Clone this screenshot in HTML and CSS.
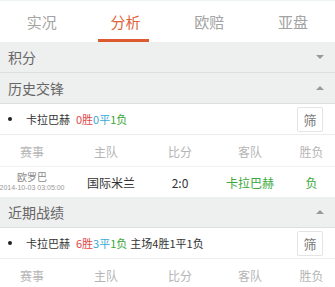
FILE: index.html
```html
<!DOCTYPE html>
<html lang="zh-CN">
<head>
    <meta charset="UTF-8">
    <meta name="viewport" content="width=device-width, initial-scale=1.0">
    <title>分析</title>
    <link rel="stylesheet" href="styles.css">
</head>
<body>

    <div class="tabs">
        <div class="tab">实况</div>
        <div class="tab active">分析</div>
        <div class="tab">欧赔</div>
        <div class="tab">亚盘</div>
    </div>

    <div class="section">
        <span>积分</span>
        <span class="arrow down"></span>
    </div>

    <div class="section">
        <span>历史交锋</span>
        <span class="arrow up"></span>
    </div>

    <div class="summary">
        <span class="dot"></span>
        <span class="team">卡拉巴赫</span>
        <span class="red">0胜</span><span class="blue">0平</span><span class="green">1负</span>
        <button class="filter">筛</button>
    </div>

    <div class="grid head">
        <div>赛事</div>
        <div>主队</div>
        <div>比分</div>
        <div>客队</div>
        <div>胜负</div>
    </div>

    <div class="grid match">
        <div class="league">
            <span class="league-name">欧罗巴</span>
            <span class="date">2014-10-03 03:05:00</span>
        </div>
        <div class="home-team">国际米兰</div>
        <div>2:0</div>
        <div class="green">卡拉巴赫</div>
        <div class="green">负</div>
    </div>

    <div class="section">
        <span>近期战绩</span>
        <span class="arrow up"></span>
    </div>

    <div class="summary">
        <span class="dot"></span>
        <span class="team">卡拉巴赫</span>
        <span class="red">6胜</span><span class="blue">3平</span><span class="green">1负</span>
        <span class="team home">主场4胜1平1负</span>
        <button class="filter">筛</button>
    </div>

    <div class="grid head">
        <div>赛事</div>
        <div>主队</div>
        <div>比分</div>
        <div>客队</div>
        <div>胜负</div>
    </div>

</body>
</html>
```

FILE: styles.css
```css
body {
    margin: 0;
    font-family: "Noto Sans CJK SC", "Liberation Sans", sans-serif;
    background-color: #fff;
    color: #333;
    overflow: hidden;
}

.tabs {
    display: flex;
    height: 42px;
    border-top: 1px solid #eef5ee;
    box-sizing: border-box;
}

.tab {
    flex: 1;
    display: flex;
    align-items: center;
    justify-content: center;
    font-size: 15px;
    color: #a3a3a3;
    position: relative;
}

.tab.active {
    color: #e0643a;
}

.tab.active::after {
    content: "";
    position: absolute;
    left: 14px;
    right: 19px;
    bottom: 0;
    height: 3px;
    background-color: #dd5a2e;
}

.section {
    display: flex;
    align-items: center;
    justify-content: space-between;
    height: 30px;
    padding: 0 11px 0 8px;
    background-color: #eeefef;
    border-bottom: 1px solid #dedede;
    font-size: 14px;
    color: #666;
}

.arrow {
    width: 0;
    height: 0;
    border-left: 4px solid transparent;
    border-right: 4px solid transparent;
}

.arrow.down {
    border-top: 4px solid #9a9a9a;
}

.arrow.up {
    border-bottom: 4px solid #9a9a9a;
}

.summary {
    display: flex;
    align-items: center;
    height: 30px;
    padding: 0 12px 0 8px;
    border-bottom: 1px solid #ececec;
    font-size: 11px;
}

.dot {
    width: 4px;
    height: 4px;
    border-radius: 50%;
    background-color: #222;
    margin-right: 14px;
}

.team {
    color: #333;
    margin-right: 6px;
}

.home {
    margin-left: 3px;
}

.red {
    color: #e04848;
}

.blue {
    color: #3aa8d8;
}

.green {
    color: #3aa83a;
}

.filter {
    margin-left: auto;
    width: 26px;
    height: 25px;
    padding: 0;
    border: 1px solid #e4e4e4;
    border-radius: 2px;
    background-color: #fff;
    font-family: inherit;
    font-size: 13px;
    color: #777;
}

.grid {
    display: grid;
    grid-template-columns: 64px 84px 64px 76px 1fr;
    align-items: center;
    text-align: center;
}

.grid > div {
    min-width: 0;
}

.head {
    height: 31px;
    padding-top: 2px;
    box-sizing: border-box;
    font-size: 12px;
    color: #b5b5b5;
}

.match {
    height: 30px;
    font-size: 12px;
    color: #333;
    border-top: 1px solid #f0f0f0;
}

.home-team {
    padding-left: 10px;
}

.league {
    display: flex;
    flex-direction: column;
    align-items: center;
    line-height: 1.25;
}

.league-name {
    font-size: 10px;
    color: #888;
}

.date {
    font-family: "Liberation Sans", sans-serif;
    font-size: 7px;
    color: #999;
    white-space: nowrap;
}
```
